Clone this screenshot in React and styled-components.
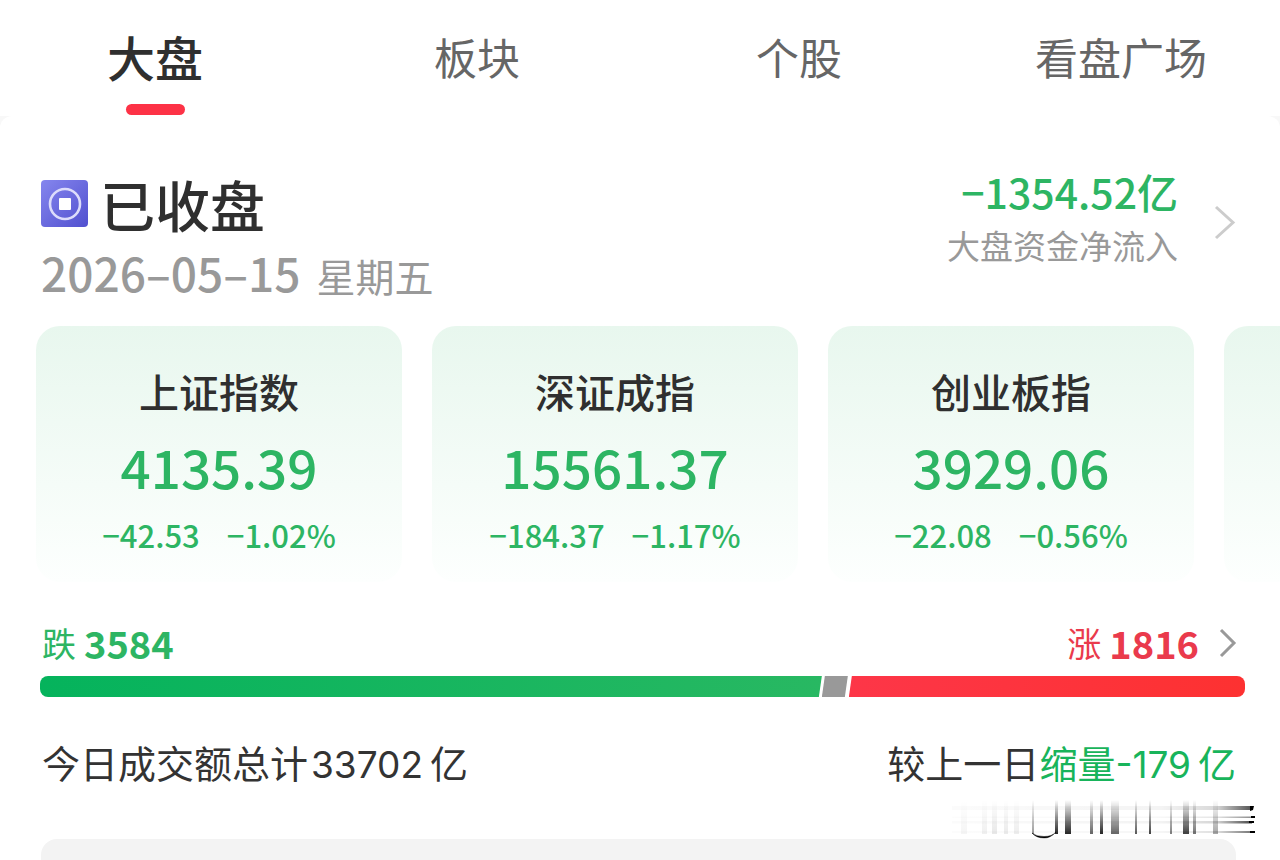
import { useState } from "react";
import styled, { createGlobalStyle } from "styled-components";

const GREEN = "#2db563";
const RED = "#ea3a4c";

const GlobalStyle = createGlobalStyle`
    * {
        box-sizing: border-box;
    }
    body {
        margin: 0;
        background: #fff;
        color: #333;
        font-family: "Noto Sans CJK SC", sans-serif;
    }
    button {
        border: 0;
        padding: 0;
        background: none;
        color: inherit;
        font: inherit;
        cursor: pointer;
    }
    h1, h2, p {
        margin: 0;
    }
`;

const Page = styled.div`
    display: flex;
    flex-direction: column;
    min-height: 100vh;
    overflow: hidden;
`;

const TabBar = styled.nav`
    display: grid;
    grid-template-columns: repeat(4, 1fr);
    margin: 0 -2px 0 -6px;
    height: 116px;
`;

const Tab = styled.button`
    display: flex;
    flex-direction: column;
    align-items: center;
    gap: 18px;
    padding-top: 26px;
    line-height: 60px;
    font-size: ${(p) => (p.$active ? 48 : 43)}px;
    font-weight: ${(p) => (p.$active ? 500 : 400)};
    color: ${(p) => (p.$active ? "#2f2f2f" : "#666")};

    &::after {
        content: "";
        width: 59px;
        height: 11px;
        border-radius: 6px;
        background: ${(p) => (p.$active ? "#fd3246" : "transparent")};
    }
`;

// Sfondo grigio visibile solo negli angoli del pannello
const PanelBack = styled.div`
    display: flex;
    flex-direction: column;
    flex: 1;
    background: linear-gradient(#f8f8f8 20px, #fff 20px);
`;

const Panel = styled.main`
    display: flex;
    flex-direction: column;
    flex: 1;
    border-radius: 12px 12px 0 0;
    background: #fff;
`;

const Summary = styled.header`
    display: flex;
    justify-content: space-between;
    padding: 52px 44px 0 41px;
`;

const TitleRow = styled.div`
    display: flex;
    align-items: center;
    gap: 11px;
    height: 72px;
`;

const Title = styled.h1`
    padding-bottom: 2px;
    font-size: 55px;
    font-weight: 500;
    line-height: 72px;
    color: #2f2f2f;
`;

const DateRow = styled.p`
    display: flex;
    align-items: baseline;
    gap: 16px;
    height: 64px;
    line-height: 64px;
    font-size: 46px;
    font-weight: 500;
    color: #999;
`;

const Weekday = styled.span`
    font-size: 39px;
    font-weight: 400;
`;

const Flow = styled.button`
    display: flex;
    align-items: center;
    align-self: flex-start;
    gap: 36px;
    text-align: right;
`;

const FlowText = styled.span`
    display: flex;
    flex-direction: column;
`;

const FlowValue = styled.span`
    font-size: 41px;
    font-weight: 500;
    line-height: 46px;
    color: ${GREEN};
`;

const FlowLabel = styled.span`
    font-size: 33px;
    line-height: 62px;
    color: #999;
`;

const Cards = styled.section`
    display: flex;
    gap: 30px;
    margin-top: 22px;
    padding-left: 36px;
    overflow: hidden;
`;

const Card = styled.article`
    display: flex;
    flex-direction: column;
    align-items: center;
    flex: 0 0 calc((100% - 146px) / 3);
    height: 256px;
    padding-top: 34px;
    border-radius: 24px;
    background: linear-gradient(#e8f7ee, #fdfffe);
    color: ${GREEN};
`;

const CardName = styled.h2`
    font-size: 40px;
    font-weight: 500;
    line-height: 62px;
    color: #2f2f2f;
`;

const CardPrice = styled.p`
    font-size: 53px;
    font-weight: 500;
    line-height: 88px;
`;

const CardChange = styled.p`
    display: flex;
    gap: 27px;
    font-size: 31px;
    font-weight: 500;
    line-height: 50px;
`;

const Breadth = styled.section`
    padding: 36px 35px 0 40px;
`;

const Counts = styled.div`
    display: flex;
    justify-content: space-between;
    padding: 0 8px 0 2px;
    line-height: 50px;
`;

const Count = styled.button`
    display: flex;
    align-items: center;
    gap: 8px;
    font-size: 34px;
    color: ${(p) => p.$color};

    strong {
        font-size: 38px;
        font-weight: 700;
    }
    svg {
        margin-left: 12px;
    }
`;

const Bar = styled.div`
    display: flex;
    height: 21px;
    margin-top: 8px;
    border-radius: 8px;
    overflow: hidden;
`;

const Down = styled.div`
    background: linear-gradient(90deg, #05b35c, #28b862);
    clip-path: polygon(0 0, 100% 0, calc(100% - 3px) 100%, 0 100%);
`;

const Flat = styled.div`
    flex: 0 0 26px;
    margin: 0 1px 0 0;
    background: #999;
    clip-path: polygon(3px 0, 100% 0, calc(100% - 3px) 100%, 0 100%);
`;

const Up = styled.div`
    background: linear-gradient(90deg, #fd3648, #fd3131);
    clip-path: polygon(3px 0, 100% 0, 100% 100%, 0 100%);
`;

const Turnover = styled.section`
    position: relative;
    display: flex;
    justify-content: space-between;
    padding: 37px 44px 44px 42px;
    font-family: Inter, "Noto Sans CJK SC", sans-serif;
    font-size: 38px;
    line-height: 60px;
`;

const TurnoverText = styled.p`
    display: flex;
    align-items: baseline;
`;

const Accent = styled.span`
    display: flex;
    align-items: baseline;
    color: #18b45b;
`;

const Amount = styled.span`
    margin: 0 7px 0 ${(p) => (p.$tight ? 0 : 3)}px;
    font-size: 37px;
`;

const Streaks = styled.svg`
    position: absolute;
    right: 20px;
    bottom: 0;
`;

const NextBlock = styled.div`
    flex: 1;
    min-height: 20px;
    margin: 0 44px 0 41px;
    border-radius: 16px 16px 0 0;
    background: #f3f3f3;
`;

const TABS = ["大盘", "板块", "个股", "看盘广场"];

const INDEXES = [
    { name: "上证指数", price: "4135.39", diff: "−42.53", rate: "−1.02%" },
    { name: "深证成指", price: "15561.37", diff: "−184.37", rate: "−1.17%" },
    { name: "创业板指", price: "3929.06", diff: "−22.08", rate: "−0.56%" },
];

// [x, larghezza, opacità]
const STREAKS = [
    [5, 6, 0.04], [26, 5, 0.06], [36, 5, 0.09], [48, 4, 0.08], [58, 5, 0.07],
    [76, 2, 0.4], [99, 3, 0.85], [109, 6, 0.85], [134, 3, 0.6], [144, 3, 0.85],
    [155, 8, 0.6], [179, 2, 0.65], [193, 2, 0.75], [214, 2, 0.5],
    [227, 6, 0.75], [237, 3, 0.55], [257, 5, 0.35],
];

const down = 3584;
const up = 1816;

const Chevron = ({ width, height, color }) => (
    <svg width={width} height={height} viewBox={`0 0 ${width} ${height}`} fill="none" aria-hidden="true">
        <path
            d={`M2 2 L${width - 3} ${height / 2} L2 ${height - 2}`}
            stroke={color}
            strokeWidth="3"
        />
    </svg>
);

const CoinIcon = () => (
    <svg width="48" height="48" viewBox="0 0 48 48" aria-hidden="true">
        <defs>
            <linearGradient id="coin" x1="0" y1="0" x2="1" y2="1">
                <stop offset="0" stopColor="#8586ee" />
                <stop offset="1" stopColor="#5150cf" />
            </linearGradient>
        </defs>
        <rect width="47" height="47" rx="4" fill="url(#coin)" />
        <circle cx="24" cy="24" r="15" fill="none" stroke="#dcdcfb" strokeWidth="2.6" />
        <rect x="18" y="18" width="12" height="12" rx="1" fill="#fff" />
    </svg>
);

const StreakArt = () => (
    <Streaks width="308" height="44" viewBox="0 0 308 44" aria-hidden="true">
        <defs>
            <linearGradient id="fall" x1="0" y1="0" x2="0" y2="1">
                <stop offset="0" stopColor="#000" stopOpacity="0" />
                <stop offset="0.4" stopColor="#000" stopOpacity="0.4" />
                <stop offset="1" stopColor="#000" />
            </linearGradient>
            <linearGradient id="run" x1="0" y1="0" x2="1" y2="0">
                <stop offset="0" stopColor="#000" stopOpacity="0.02" />
                <stop offset="0.7" stopColor="#000" stopOpacity="0.06" />
                <stop offset="0.88" stopColor="#000" stopOpacity="0.2" />
                <stop offset="1" stopColor="#000" stopOpacity="0.9" />
            </linearGradient>
        </defs>
        {STREAKS.map(([x, w, o]) => (
            <rect key={x} x={x + 4} y="5" width={w} height="34" fill="url(#fall)" opacity={o} />
        ))}
        <rect x="0" y="11" width="300" height="4" fill="url(#run)" opacity="0.75" />
        <rect x="0" y="21.5" width="300" height="1.5" fill="url(#run)" opacity="0.5" />
        <rect x="0" y="26" width="300" height="2.5" fill="url(#run)" opacity="0.8" />
        <rect x="0" y="36" width="300" height="2" fill="url(#run)" opacity="0.6" />
        <path d="M298 11 h4 l-1 4 l-3 1 z M299 21 h4 v2 h-4 z M297 26 h5 v2 h-5 z M298 36 h5 v2 h-5 z" fill="#000" />
        <path d="M80 38 Q84 41.5 92 41.5 Q100 41.5 104 37 Q98 43.5 92 43 Q84 43 80 38 Z" fill="#000" stroke="#000" strokeWidth="0.4" />
    </Streaks>
);

const App = () => {
    const [activeTab, setActiveTab] = useState(TABS[0]);

    return (
        <Page>
            <GlobalStyle />
            <TabBar>
                {TABS.map((tab) => (
                    <Tab key={tab} type="button" $active={tab === activeTab} onClick={() => setActiveTab(tab)}>
                        {tab}
                    </Tab>
                ))}
            </TabBar>

            <PanelBack>
                <Panel>
                    {/* Stato del mercato e flusso netto */}
                    <Summary>
                        <div>
                            <TitleRow>
                                <CoinIcon />
                                <Title>已收盘</Title>
                            </TitleRow>
                            <DateRow>
                                2026–05–15 <Weekday>星期五</Weekday>
                            </DateRow>
                        </div>
                        <Flow type="button">
                            <FlowText>
                                <FlowValue>−1354.52亿</FlowValue>
                                <FlowLabel>大盘资金净流入</FlowLabel>
                            </FlowText>
                            <Chevron width={22} height={35} color="#ccc" />
                        </Flow>
                    </Summary>

                    {/* Indici */}
                    <Cards>
                        {INDEXES.map((item) => (
                            <Card key={item.name}>
                                <CardName>{item.name}</CardName>
                                <CardPrice>{item.price}</CardPrice>
                                <CardChange>
                                    <span>{item.diff}</span>
                                    <span>{item.rate}</span>
                                </CardChange>
                            </Card>
                        ))}
                        <Card />
                    </Cards>

                    {/* Titoli in calo e in rialzo */}
                    <Breadth>
                        <Counts>
                            <Count type="button" $color={GREEN}>
                                跌<strong>{down}</strong>
                            </Count>
                            <Count type="button" $color={RED}>
                                涨<strong>{up}</strong>
                                <Chevron width={18} height={30} color="#999" />
                            </Count>
                        </Counts>
                        <Bar>
                            <Down style={{ flex: down }} />
                            <Flat />
                            <Up style={{ flex: up }} />
                        </Bar>
                    </Breadth>

                    <Turnover>
                        <TurnoverText>
                            今日成交额总计<Amount>33702</Amount>亿
                        </TurnoverText>
                        <TurnoverText>
                            较上一日
                            <Accent>
                                缩量<Amount $tight>-179</Amount>亿
                            </Accent>
                        </TurnoverText>
                        <StreakArt />
                    </Turnover>
                    <NextBlock />
                </Panel>
            </PanelBack>
        </Page>
    );
};

export default App;
